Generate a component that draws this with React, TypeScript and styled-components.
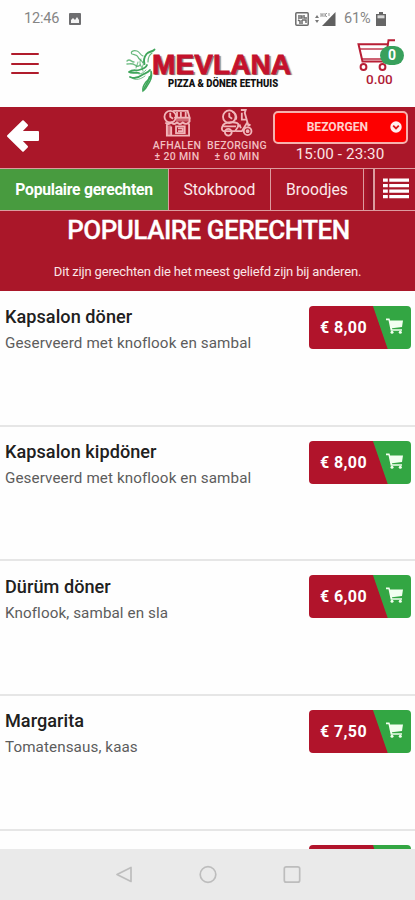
import React from "react";
import styled, { createGlobalStyle } from "styled-components";

const RED = "#aa1729";
const LINE = "#dc9c9f";

const GlobalStyle = createGlobalStyle`
  * { box-sizing: border-box; }
  body { margin: 0; background: #fff; font-family: Roboto, "Open Sans", sans-serif; }
  svg { display: block; flex: none; }
`;

const Screen = styled.div`
  width: 415px;
  height: 900px;
  display: flex;
  flex-direction: column;
  overflow: hidden;
  background: #fefefe;
`;

const StatusBar = styled.div`
  height: 36px;
  flex: none;
  display: flex;
  align-items: center;
  padding: 1px 29px 0 24px;
  color: #858585;
  font-size: 14.5px;
`;
const Clock = styled.span`
  width: 45px;
  letter-spacing: -0.15px;
`;
const StatusRight = styled.div`
  margin-left: auto;
  display: flex;
  align-items: center;
`;
const SignalSlot = styled.span`
  margin-left: 6px;
`;
const Battery = styled.span`
  margin: 0 4px 0 8px;
  width: 28px;
  letter-spacing: -0.2px;
  white-space: nowrap;
`;

const Header = styled.header`
  height: 71px;
  flex: none;
  display: flex;
  padding: 0 8px 0 11px;
`;
const MenuButton = styled.div`
  width: 28px;
  height: 21px;
  margin-top: 17px;
  display: flex;
  flex-direction: column;
  justify-content: space-between;
`;
const MenuLine = styled.span`
  height: 2px;
  border-radius: 1px;
  background: #b01c2c;
`;
const Brand = styled.div`
  display: flex;
  margin: 11px 0 0 87px;
  width: 168px;
`;
const BrandWords = styled.div`
  margin-left: -6px;
  padding-top: 5px;
  white-space: nowrap;
`;
const BrandName = styled.div`
  font: bold 28px/26px "Liberation Sans", Arial, sans-serif;
  letter-spacing: 0.1px;
  color: #c4122c;
  text-shadow: 1px 1px 0 #77777f, 2px 1px 1px #999;
  -webkit-text-stroke: 0.8px #c4122c;
`;
const BrandSub = styled.div`
  width: 130px;
  margin-left: 16px;
  font: 900 11.6px/11px Roboto, sans-serif;
  color: #111;
  transform: scaleX(0.82);
  transform-origin: 0 0;
`;
const Basket = styled.div`
  width: 50px;
  margin-left: auto;
  padding-top: 3px;
  display: flex;
  flex-direction: column;
  position: relative;
`;
const Count = styled.span`
  position: absolute;
  left: 23px;
  top: 10px;
  width: 24px;
  height: 19px;
  border-radius: 10px;
  background: #38a05c;
  color: #fff;
  font: bold 14px/19px Roboto, sans-serif;
  text-align: center;
`;
const Total = styled.span`
  font-size: 13.5px;
  line-height: 14px;
  font-weight: 500;
  color: #b01c38;
  padding-left: 9px;
`;

const OrderBar = styled.div`
  height: 61px;
  flex: none;
  background: ${RED};
  display: flex;
  color: #fff;
`;
const Back = styled.div`
  width: 150px;
  padding: 12px 0 0 6px;
`;
const Method = styled.div<{ $width: number }>`
  width: ${(p) => p.$width}px;
  display: flex;
  flex-direction: column;
  align-items: center;
  color: #f2bfc1;
  padding-top: 2px;
`;
const MethodText = styled.div`
  font-size: 10.5px;
  line-height: 12px;
  font-weight: 500;
  letter-spacing: 0.3px;
  text-align: center;
  white-space: nowrap;
  margin-top: 3px;
`;
const MethodLine = styled.div`
  height: 11px;
  line-height: 12px;
`;
const Slot = styled.div`
  margin-left: 3px;
  width: 135px;
  padding-top: 4px;
  display: flex;
  flex-direction: column;
  align-items: center;
`;
const Select = styled.div`
  width: 135px;
  height: 33px;
  border: 2px solid #f6b2ae;
  border-radius: 5px;
  background: #fd0000;
  display: flex;
  align-items: center;
  justify-content: flex-end;
  gap: 22px;
  padding: 0 4px 1px 0;
  font-size: 12.1px;
  font-weight: 700;
  color: #ffd0cc;
`;
const Hours = styled.div`
  font-size: 15.2px;
  line-height: 18px;
  margin: 1px 1px 0 0;
  letter-spacing: 0.1px;
  color: #fbe3e4;
`;

const Tabs = styled.nav`
  height: 43px;
  flex: none;
  display: flex;
  background: ${RED};
  border-top: 1px solid ${LINE};
  border-bottom: 1px solid ${LINE};
`;
const Tab = styled.div<{ $width: number; $active?: boolean }>`
  width: ${(p) => p.$width}px;
  flex: none;
  display: flex;
  align-items: center;
  justify-content: center;
  border-right: 1px solid ${LINE};
  background: ${(p) => (p.$active ? "#489b3f" : RED)};
  color: ${(p) => (p.$active ? "#fff" : "#fce9ea")};
  font-size: 15.7px;
  font-weight: ${(p) => (p.$active ? 700 : 400)};
  letter-spacing: ${(p) => (p.$active ? -0.25 : 0)}px;
  white-space: nowrap;
`;
const NextTab = styled.div`
  width: 11px;
  border-right: 2px solid ${LINE};
  background: linear-gradient(90deg, ${RED} 0, #8c1026 100%);
`;
const ListButton = styled.div`
  flex: 1;
  padding: 9px 0 0 8px;
`;

const Banner = styled.section`
  height: 80px;
  flex: none;
  background: ${RED};
  text-align: center;
  color: #fff;
`;
const BannerTitle = styled.h1`
  margin: 0;
  padding: 3px 0 0 2px;
  font-size: 26px;
  line-height: 32px;
  font-weight: 500;
  letter-spacing: -0.5px;
  -webkit-text-stroke: 0.3px #fff;
  white-space: nowrap;
`;
const BannerText = styled.p`
  margin: 18px 0 0;
  font-size: 13px;
  line-height: 16px;
  letter-spacing: -0.17px;
  color: #fbe6e7;
`;

const Dishes = styled.main`
  flex: 1;
  min-height: 0;
  overflow: hidden;
  padding-top: 1px;
`;
const Dish = styled.article`
  height: 134.7px;
  border-bottom: 2px solid #e6e6e6;
  display: flex;
  justify-content: space-between;
  padding: 14px 4px 0 5px;
`;
const DishName = styled.h2`
  margin: 0;
  font-size: 18.1px;
  line-height: 22px;
  font-weight: 500;
  letter-spacing: 0.05px;
  color: #202020;
  white-space: nowrap;
`;
const DishInfo = styled.p`
  margin: 5px 0 0;
  font-size: 15.2px;
  line-height: 20px;
  letter-spacing: 0.1px;
  color: #5c5c5c;
  white-space: nowrap;
`;
const DishText = styled.div<{ $drop: number }>`
  padding-top: ${(p) => p.$drop}px;
`;
const Buy = styled.div`
  width: 102px;
  height: 43px;
  flex: none;
  border-radius: 4px;
  overflow: hidden;
  display: flex;
  align-items: center;
  background: linear-gradient(71deg, #b1142b 0 67%, #33a643 67.8%);
  color: #fff;
`;
const Price = styled.span`
  width: 77px;
  padding-left: 11px;
  font-size: 16px;
  font-weight: 700;
  letter-spacing: 0.4px;
`;
const CartSlot = styled.span`
  padding-bottom: 3px;
`;

const NavBar = styled.footer`
  height: 51px;
  flex: none;
  background: #eaeaea;
  display: flex;
  justify-content: center;
  gap: 66px;
  padding-top: 16px;
`;

const PhotoIcon = () => (
  <svg width="12" height="12" viewBox="0 0 12 12">
    <rect width="12" height="12" rx="1" fill="#6e6e70" />
    <path d="M2 10V7l2-2 2 2 2-3 2 3v3z" fill="#f4f4f4" />
  </svg>
);
const NfcIcon = () => (
  <svg width="14" height="14" viewBox="0 0 14 14" fill="none" stroke="#6c6c6c" strokeWidth="1.500">
    <rect x=".8" y=".8" width="12.400" height="12.400" rx="1" />
    <path d="M3 4h4v2H3M9 3v3h3M3 8l2 1v3M7 8v4M7 8h4v3" />
  </svg>
);
const SignalIcon = () => (
  <svg width="21" height="14" viewBox="0 0 21 14">
    <path d="M0 6l2-3 2 3zM0 8l2 3 2-3z" fill="#777" />
    <path d="M7 14L20.500 0V14z" fill="#606060" />
    <path d="M6 1v4M8 1v4M6 3h2M10 1v4M10 3l2-2M10 3l2 2M14 1v3" stroke="#999" fill="none" />
  </svg>
);
const BatteryIcon = () => (
  <svg width="10" height="14" viewBox="0 0 10 14">
    <path d="M3 0h4v2h3v12H0V2h3z" fill="#666" />
    <rect x="1.500" y="3.300" width="7" height="3" fill="#d8d8d8" />
  </svg>
);
const Dervish = () => (
  <svg width="32" height="48" viewBox="0 0 32 48" fill="none" stroke="#3fa55a" strokeLinecap="round">
    <path d="M28.500 2.500C27 5 23 4 20.500 7c-3 4-3 7-2 10" strokeWidth="1.900" />
    <path d="M26 6c-3 2-4 5-4 9" strokeWidth="1.200" opacity=".8" />
    <path d="M17 9c-3-1-3-4-6-5-4-1-7 1-5 3 2 1 5 0 6 3s4 3 5 6" strokeWidth="1.200" opacity=".8" />
    <path d="M1 14c3-3 4 1 7 1M1 17c3 0 5-1 8 1 2 2 4 1 5 0" strokeWidth="1.400" opacity=".75" />
    <path d="M15 12c-2 3-1 6 1 9M12 15l-2 6M18 17c-2 1-2 5-1 7" strokeWidth="1.100" opacity=".65" />
    <path d="M3 25c4-3 7-1 10-2 4-1 7-2 8-5M3 25c3 2 7 0 10 1M4 30c4 2 8 1 12-2 3-2 6-2 8-5" strokeWidth="1.800" />
    <path d="M6 31c4 3 9 1 13-2M13 27c3 0 5-2 7-4" strokeWidth="1" opacity=".7" />
    <path d="M25 24c1 6-2 8-5 11-2 3-4 5-3 9 4-3 5-7 7-10 2-4 2-7 1-10z" strokeWidth="1.500" />
    <path d="M17.500 43c2-5 5-8 6-13" strokeWidth="1.800" />
  </svg>
);
const BasketIcon = () => (
  <svg width="40" height="33" viewBox="0 0 40 33" fill="none" stroke="#b81e35" strokeWidth="2">
    <path d="M38 1.200h-6.500L28.500 22.500H5.500L1.500 5.200h29" />
    <path d="M3 10h26" strokeWidth="1.300" />
    <path d="M4 20h24" strokeWidth="1.400" />
    <circle cx="6.500" cy="28" r="2.900" />
    <circle cx="25.500" cy="28" r="2.900" />
  </svg>
);
const BackIcon = () => (
  <svg width="34" height="34" viewBox="0 0 34 34" fill="#fff" stroke="#fff" strokeWidth="2" strokeLinejoin="round">
    <path d="M2 17L17 2.200l4 4L14.500 13H32v8H14.500l6.500 6.800-4 4z" />
  </svg>
);
const StoreIcon = () => (
  <svg width="30" height="28" viewBox="0 0 30 29" fill="none" stroke="#f1b6ba" strokeWidth="1.900">
    <path d="M11 2h15l2 7H12M15 3v6M19 3v6M24 3v6" />
    <circle cx="8" cy="8" r="6" />
    <path d="M8 4v4l3 2" />
    <path d="M14 9h14v4H14z" fill="#f1b6ba" fillOpacity=".5" stroke="none" />
    <path d="M3 14c2 2 4 2 6 0 2 2 4 2 6 0 2 2 4 2 6 0 2 2 5 2 7-1V9M4.500 16v11.500h23V15" />
    <path d="M4 17h5v10H4z" fill="#f1b6ba" fillOpacity=".6" stroke="none" />
    <rect x="14" y="18" width="9" height="7" />
    <path d="M9 18v9M16 20h5v3h-5" />
  </svg>
);
const ScooterIcon = () => (
  <svg width="34" height="28" viewBox="0 0 34 29" fill="none" stroke="#f1b6ba" strokeWidth="1.900">
    <circle cx="9" cy="8" r="6.500" />
    <path d="M9 4v4l3 2M12 3c3 0 5 4 4 8" />
    <path d="M2 18c1-5 16-6 17-1l-4 6H3c-2-1-2-3-1-5zM3 18h13" />
    <path d="M21 1h5l-1 3 4 14M22 4v7h5M16 23h6l5-8 4 2" />
    <circle cx="8" cy="24" r="3.500" />
    <circle cx="28" cy="23" r="4" />
    <circle cx="28" cy="23" r="1" />
    <path d="M17 18l3-1 1 3" />
  </svg>
);
const SelectIcon = () => (
  <svg width="12" height="12" viewBox="0 0 12 12">
    <circle cx="6" cy="6" r="5.700" fill="#fff0ee" />
    <path d="M3.200 4.700L6 7.400l2.800-2.700" fill="none" stroke="#e01414" strokeWidth="1.800" />
  </svg>
);
const ListIcon = () => (
  <svg width="26" height="21" viewBox="0 0 27 22" preserveAspectRatio="none" fill="#fff">
    <path d="M0 .5h5v3.500H0zM6.500.5H27v3.500H6.500zM0 6.200h5v3.500H0zM6.500 6.200H27v3.500H6.500zM0 12h5v3.500H0zM6.500 12H27v3.500H6.500zM0 17.700h5v3.500H0zM6.500 17.700H27v3.500H6.500z" />
  </svg>
);
const CartIcon = () => (
  <svg width="18" height="16" viewBox="0 0 18 16" fill="#f2fff0">
    <path d="M0 .5h3.500l.6 2H17L16 9 6 10.300l.2 1H16v1.500H4.700L2.500 2.200H0z" />
    <circle cx="6" cy="14.300" r="1.500" />
    <circle cx="14.300" cy="14.300" r="1.500" />
  </svg>
);
const NavIcon = ({ children }: { children: React.ReactNode }) => (
  <svg width="18" height="19" viewBox="0 0 18 19" fill="none" stroke="#bdbdbd" strokeWidth="1.700" strokeLinejoin="round">
    {children}
  </svg>
);

const dishes = [
  { name: "Kapsalon döner", info: "Geserveerd met knoflook en sambal", price: "€ 8,00" },
  { name: "Kapsalon kipdöner", info: "Geserveerd met knoflook en sambal", price: "€ 8,00" },
  { name: "Dürüm döner", info: "Knoflook, sambal en sla", price: "€ 6,00", drop: 0.5 },
  { name: "Margarita", info: "Tomatensaus, kaas", price: "€ 7,50" },
  { name: "Lahmacun döner", info: "", price: "", drop: 1 },
];

export default function App() {
  return (
    <Screen>
      <GlobalStyle />
      <StatusBar>
        <Clock>12:46</Clock>
        <PhotoIcon />
        <StatusRight>
          <NfcIcon />
          <SignalSlot>
            <SignalIcon />
          </SignalSlot>
          <Battery>61%</Battery>
          <BatteryIcon />
        </StatusRight>
      </StatusBar>
      <Header>
        <MenuButton>
          <MenuLine />
          <MenuLine />
          <MenuLine />
        </MenuButton>
        <Brand>
          <Dervish />
          <BrandWords>
            <BrandName>MEVLANA</BrandName>
            <BrandSub>PIZZA &amp; DÖNER EETHUIS</BrandSub>
          </BrandWords>
        </Brand>
        <Basket>
          <BasketIcon />
          <Count>0</Count>
          <Total>0.00</Total>
        </Basket>
      </Header>
      <OrderBar>
        <Back>
          <BackIcon />
        </Back>
        <Method $width={54}>
          <StoreIcon />
          <MethodText>
            <MethodLine>AFHALEN</MethodLine>
            <MethodLine>± 20 MIN</MethodLine>
          </MethodText>
        </Method>
        <Method $width={66}>
          <ScooterIcon />
          <MethodText>
            <MethodLine>BEZORGING</MethodLine>
            <MethodLine>± 60 MIN</MethodLine>
          </MethodText>
        </Method>
        <Slot>
          <Select>
            BEZORGEN
            <SelectIcon />
          </Select>
          <Hours>15:00 - 23:30</Hours>
        </Slot>
      </OrderBar>
      <Tabs>
        <Tab $width={169} $active>Populaire gerechten</Tab>
        <Tab $width={102}>Stokbrood</Tab>
        <Tab $width={93}>Broodjes</Tab>
        <NextTab />
        <ListButton>
          <ListIcon />
        </ListButton>
      </Tabs>
      <Banner>
        <BannerTitle>POPULAIRE GERECHTEN</BannerTitle>
        <BannerText>Dit zijn gerechten die het meest geliefd zijn bij anderen.</BannerText>
      </Banner>
      <Dishes>
        {dishes.map((d) => (
          <Dish key={d.name}>
            <DishText $drop={d.drop ?? 0}>
              <DishName>{d.name}</DishName>
              <DishInfo>{d.info}</DishInfo>
            </DishText>
            <Buy>
              <Price>{d.price}</Price>
              <CartSlot>
                <CartIcon />
              </CartSlot>
            </Buy>
          </Dish>
        ))}
      </Dishes>
      <NavBar>
        <NavIcon><path d="M16 2.500v14L2 9.500z" /></NavIcon>
        <NavIcon><circle cx="9" cy="9.500" r="7.800" /></NavIcon>
        <NavIcon><rect x="1.300" y="1.800" width="15.400" height="15.400" rx="2" /></NavIcon>
      </NavBar>
    </Screen>
  );
}
